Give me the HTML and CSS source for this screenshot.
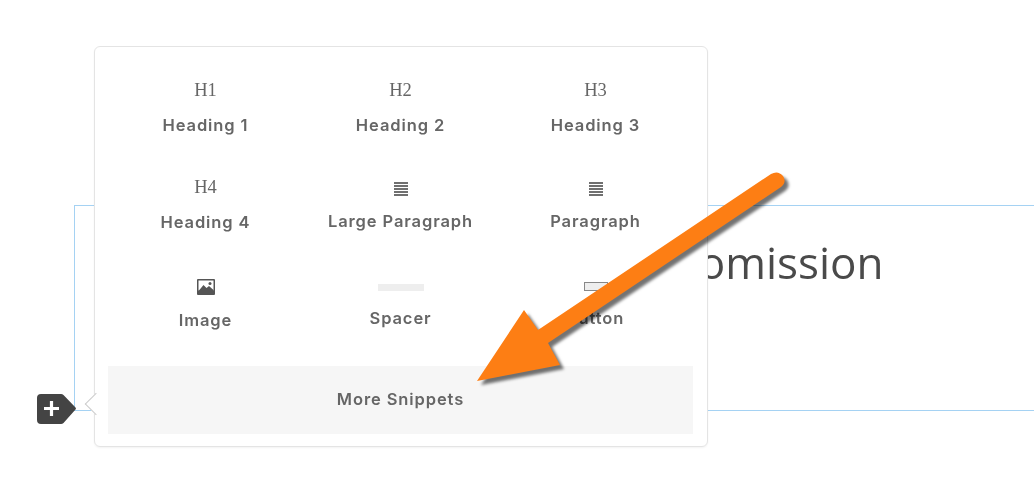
FILE: index.html
```html
<!DOCTYPE html>
<html lang="en">
<head>
  <meta charset="UTF-8" />
  <title>Snippets menu</title>
  <link rel="stylesheet" href="styles.css">
</head>
<body>
  <div class="editor">
    <h1 class="title">Comission</h1>

    <!-- add button on the block corner -->
    <svg class="add-tag" width="41" height="32" viewBox="0 0 41 32">
      <path d="M5 1H25Q26.500 1 27.500 2L39.500 14.500Q40.500 15.500 39.500 16.500L27.500 30Q26.500 31 25 31H5Q1 31 1 27V5Q1 1 5 1Z" fill="#444"/>
      <path d="M15.500 8V23M8 15.500H23" stroke="#fff" stroke-width="3.200"/>
    </svg>
  </div>

  <div class="popover">
    <span class="caret"></span>
    <div class="tiles">
      <div class="tile">
        <div class="tile-icon serif">H1</div>
        <div class="tile-label">Heading 1</div>
      </div>
      <div class="tile">
        <div class="tile-icon serif">H2</div>
        <div class="tile-label">Heading 2</div>
      </div>
      <div class="tile">
        <div class="tile-icon serif">H3</div>
        <div class="tile-label">Heading 3</div>
      </div>
      <div class="tile">
        <div class="tile-icon serif">H4</div>
        <div class="tile-label">Heading 4</div>
      </div>
      <div class="tile tile-tight">
        <div class="tile-icon"><span class="lines"></span></div>
        <div class="tile-label">Large Paragraph</div>
      </div>
      <div class="tile tile-tight">
        <div class="tile-icon"><span class="lines"></span></div>
        <div class="tile-label">Paragraph</div>
      </div>
      <div class="tile">
        <div class="tile-icon">
          <svg class="image-icon" width="18" height="16" viewBox="0 0 18 16">
            <rect width="18" height="16" rx="1" fill="#555"/>
            <rect x="1.500" y="1.500" width="15" height="10" fill="#fff"/>
            <path d="M1.500 12L6.500 6L9.500 9L12 7L16.500 11V14H1.500Z" fill="#555"/>
            <circle cx="13" cy="4.500" r="1.500" fill="#555"/>
          </svg>
        </div>
        <div class="tile-label">Image</div>
      </div>
      <div class="tile tile-tighter">
        <div class="tile-icon"><span class="spacer-bar"></span></div>
        <div class="tile-label">Spacer</div>
      </div>
      <div class="tile tile-tighter">
        <div class="tile-icon"><span class="button-box"></span></div>
        <div class="tile-label">Button</div>
      </div>
    </div>
    <div class="more">More Snippets</div>
  </div>

  <!-- annotation drawn on top of the screenshot -->
  <svg class="arrow" width="1034" height="483" viewBox="0 0 1034 483">
    <path d="M477 381L524 310L538 330L771 174Q778 170 783 176Q787 182 781 187L548 343L560 365Z" fill="#fd7e14"/>
  </svg>
</body>
</html>
```

FILE: styles.css
```css
html, body {
  margin: 0;
  height: 483px;
  overflow: hidden;
  background: #fff;
}

body {
  font-family: 'Inter', sans-serif;
  padding-top: 205px;
  box-sizing: border-box;
}

.editor {
  position: relative;
  margin-left: 74px;
  height: 204px;
  border: 1px solid #a5d2f3;
  border-right: none;
}

.title {
  margin: 0;
  padding: 26px 0 0 596px;
  font-family: 'Open Sans', sans-serif;
  font-weight: 400;
  font-size: 44px;
  line-height: 60px;
  color: #4a4a4a;
  white-space: nowrap;
  filter: blur(0.35px);
}

.add-tag {
  position: absolute;
  left: -39px;
  top: 187px;
}

.popover {
  position: absolute;
  left: 94px;
  top: 46px;
  width: 585px;
  height: 362px;
  padding: 25px 14px 12px 13px;
  background: #fff;
  border: 1px solid #e4e4e4;
  border-radius: 6px;
  box-shadow: 0 1px 2px rgba(0, 0, 0, 0.05);
  filter: blur(0.35px);
}

.caret {
  position: absolute;
  left: -7px;
  top: 349px;
  width: 16px;
  height: 16px;
  background: #fff;
  border-left: 1px solid #ccc;
  border-bottom: 1px solid #ccc;
  box-sizing: border-box;
  transform: rotate(45deg);
}

.tiles {
  display: grid;
  grid-template-columns: repeat(3, 195px);
  grid-template-rows: 97px 98px 99px;
}

.tile {
  display: flex;
  flex-direction: column;
  align-items: center;
  color: #666;
}

.tile-icon {
  display: flex;
  align-items: center;
  justify-content: center;
  height: 36px;
}

.serif {
  font-family: 'Liberation Serif', serif;
  font-size: 18.500px;
}

.tile-label {
  font-size: 16.500px;
  font-weight: 600;
  line-height: 34px;
  letter-spacing: 0.900px;
}

.tile-tight .tile-label {
  margin-top: -1px;
}

.tile-tighter .tile-label {
  margin-top: -2px;
}

.lines {
  display: block;
  width: 14px;
  height: 2px;
  background: #707070;
  box-shadow: 0 3px 0 #707070, 0 6px 0 #707070, 0 9px 0 #707070, 0 12px 0 #707070;
  transform: translateY(-4px);
}

.image-icon {
  margin-top: 4px;
}

.spacer-bar {
  display: block;
  width: 46px;
  height: 7px;
  margin-top: 4px;
  background: #eee;
}

.button-box {
  display: block;
  width: 24px;
  height: 9px;
  margin-top: 2px;
  box-sizing: border-box;
  background: #eee;
  border: 1px solid #888;
}

.more {
  height: 68px;
  line-height: 67px;
  text-align: center;
  background: #f6f6f6;
  color: #666;
  font-size: 16.500px;
  font-weight: 600;
  letter-spacing: 0.900px;
}

.arrow {
  position: absolute;
  left: 0;
  top: 0;
  filter: drop-shadow(4px 4px 1.500px rgba(0, 0, 0, 0.55));
}
```
